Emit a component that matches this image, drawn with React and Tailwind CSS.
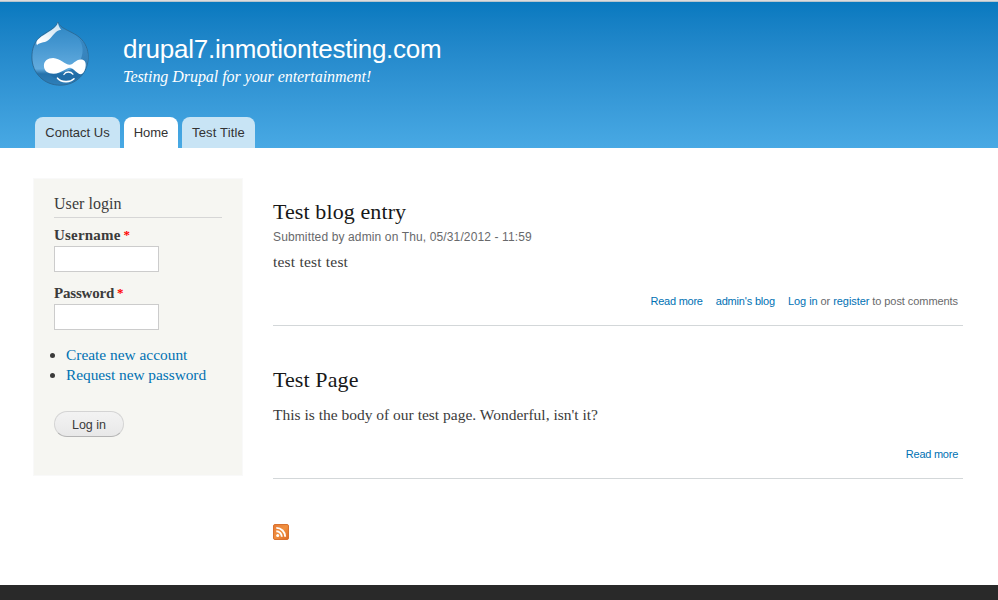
const serif = "font-['Liberation_Serif',serif]";
const sans = "font-['Liberation_Sans',sans-serif]";

function DropletLogo() {
  return (
    <svg className="block h-[66px] w-[60px]" viewBox="0.8 0.8 60 66">
      <defs>
        <linearGradient id="drop" x1="0" y1="0" x2="0" y2="1">
          <stop offset="0" stopColor="#2d86c3" />
          <stop offset="0.35" stopColor="#4496d0" />
          <stop offset="0.74" stopColor="#62abde" />
          <stop offset="0.82" stopColor="#2673ac" />
          <stop offset="1" stopColor="#2e7fb9" />
        </linearGradient>
        <linearGradient id="shine" x1="1" y1="0" x2="0" y2="1">
          <stop offset="0" stopColor="#fff" stopOpacity="0.75" />
          <stop offset="0.45" stopColor="#fff" stopOpacity="0.85" />
          <stop offset="0.85" stopColor="#fff" />
        </linearGradient>
        <linearGradient id="edge" x1="0" y1="0" x2="0" y2="1">
          <stop offset="0" stopColor="#1f6ba6" stopOpacity="0.25" />
          <stop offset="1" stopColor="#1f6ba6" stopOpacity="0.9" />
        </linearGradient>
      </defs>
      <path d="M27.700 0.800C29 5 34 7.500 39 10C43 12 46 13.500 49 16C55 21 58 28 58 36C58 52 46 64 30 64C14 64 1.700 52 1.700 36C1.700 28 4 21 9 16.500C12 13.500 16 11.500 20 9C24 6.500 27 4 27.700 0.800Z" fill="url(#drop)" stroke="#2c6690" strokeOpacity="0.85" strokeWidth="1" />
      <path d="M47 15.500C55 21 57.500 28 57.500 36C57.500 42 56 47 53 51C51 54 47 58 43 60C34 62 24 58 18 52C32 54 45 48 50 39C54 31 53 22 47 15.500Z" fill="url(#edge)" />
      <path d="M27.700 1.200C28.300 5 29.700 7 31 8.500C25 9 23 15 18 19C14 22 8 21 7 24C5.500 22.500 6 20 8 18C12 14 17 12 21 9C25 6 27.200 4 27.700 1.200Z" fill="url(#shine)" />
      <path d="M13.700 44.500C13.700 39.500 17.500 36.700 23 36.700C30 37 35 43.500 39.500 43.500C43 43.500 45.500 38.300 50.500 38.300C54.500 38.300 55.800 41 55.500 44.500C55 49 53 53 50.500 53C47 53 43.500 47 40 46.500C35.500 46.500 31 52.500 23.500 52.500C17.500 52.500 13.700 49.500 13.700 44.500Z" fill="#fff" />
      <path d="M33.700 53.300C35.500 50 40.500 50 42.700 53" fill="none" stroke="#fff" strokeWidth="1.300" strokeLinecap="round" />
      <path d="M27.300 57C31 61.300 40 61.600 43.800 57.600" fill="none" stroke="#fff" strokeWidth="1.600" strokeLinecap="round" />
    </svg>
  );
}

function FeedIcon() {
  return (
    <svg className="block h-4 w-4" viewBox="0 0 16 16">
      <defs>
        <linearGradient id="feed" x1="0" y1="0" x2="1" y2="1">
          <stop offset="0" stopColor="#e77b36" />
          <stop offset="0.5" stopColor="#f0903f" />
          <stop offset="1" stopColor="#dd6a28" />
        </linearGradient>
      </defs>
      <rect x="0.500" y="0.500" width="15" height="15" rx="1.500" fill="url(#feed)" stroke="#d9722f" />
      <circle cx="4.700" cy="11.400" r="1.500" fill="#fff" />
      <path d="M3.300 7.200A5.500 5.500 0 0 1 8.800 12.800M3.300 3.900A8.900 8.900 0 0 1 12.200 12.800" fill="none" stroke="#fff" strokeWidth="1.900" />
    </svg>
  );
}

function Field({ label, tracking }) {
  return (
    <div className="mb-[12px] h-[46px]">
      <div className={`${serif} flex h-[20px] text-[15px] leading-[18px] font-bold`}>
        <span className={tracking}>{label}</span>
        <span className="ml-[3px] text-[13px] font-bold text-[#f00]">*</span>
      </div>
      <input className="block h-[26px] w-[105px] border border-[#ccc] bg-white" />
    </div>
  );
}

export default function App() {
  return (
    <div className={`flex h-[600px] w-[998px] flex-col overflow-hidden bg-white text-[#3b3b3b] ${sans}`}>
      <div className="h-px bg-[#dcdcdc]" />
      <div className="h-px bg-[#b4c4ce]" />
      <header className="flex h-[146px] flex-col justify-between bg-linear-to-b from-[#0779bf] to-[#48a9e4]">
        <div className="flex pt-[20px] pl-[31px]">
          <DropletLogo />
          <div className="ml-[32px] text-white">
            <div className="mt-[12px] h-[30px] text-[26px] leading-[31px] whitespace-nowrap"><span className="tracking-[-0.25px]">drupal7.inmotiontesting.com</span></div>
            <div className={`${serif} h-[20px] text-[16px] leading-[26px] whitespace-nowrap italic`}><span className="tracking-[-0.05px]">Testing Drupal for your entertainment!</span></div>
          </div>
        </div>
        <nav className="flex h-[31px] gap-1 pl-[35px] text-[13px] leading-[31px] text-[#333]">
          <a className="w-[85px] rounded-t-[8px] bg-[#c8e4f5] text-center whitespace-nowrap">Contact Us</a>
          <a className="w-[54px] rounded-t-[8px] bg-white text-center">Home</a>
          <a className="w-[73px] rounded-t-[8px] bg-[#c8e4f5] text-center tracking-[0.15px] whitespace-nowrap">Test Title</a>
        </nav>
      </header>

      <div className="flex h-[437px] items-start">
        <aside className="mt-[30px] ml-[33px] h-[298px] w-[210px] border border-[#f9f9f9] bg-[#f6f6f2] px-[20px] pt-[15px]">
          <h2 className={`${serif} mb-[8px] h-[24px] w-[168px] border-b border-[#d6d6d6] text-[16px] leading-[20px]`}><span className="tracking-[0.05px]">User login</span></h2>
          <Field label="Username" tracking="tracking-[0.2px]" />
          <Field label="Password" tracking="tracking-[-0.2px]" />
          <ul className={`${serif} pt-[3px] pl-[12px] text-[15.400px] leading-[20px] text-[#0071b3]`}>
            <li className="flex h-5 items-center"><span className="mr-[11px] -ml-[16px] h-[5px] w-[5px] rounded-full bg-[#3b3b3b]" /><span className="whitespace-nowrap">Create new account</span></li>
            <li className="flex h-5 items-center"><span className="mr-[11px] -ml-[16px] h-[5px] w-[5px] rounded-full bg-[#3b3b3b]" /><span className="tracking-[-0.05px] whitespace-nowrap">Request new password</span></li>
          </ul>
          <button className="mt-[26px] block h-[26px] w-[70px] rounded-full border border-[#d4d4d4] border-b-[#b4b4b4] bg-linear-to-b from-[#f3f3f3] to-[#e8e8e8] text-[12.500px] leading-[26px] text-[#3a3a3a]">Log in</button>
        </aside>

        <main className="ml-[30px] w-[690px]">
          <article className="h-[178px] border-b border-[#d3d7d9] pt-[50px]">
            <h2 className={`${serif} h-[29px] text-[22px] leading-[28px] text-[#181818]`}><span className="tracking-[0.1px]">Test blog entry</span></h2>
            <p className="h-[20px] text-[12px] leading-[20px] text-[#68696b]"><span className="tracking-[0.130px]">Submitted by admin on Thu, 05/31/2012 - 11:59</span></p>
            <p className={`${serif} mt-[5px] h-[20px] text-[15.500px] leading-[20px]`}><span className="tracking-[0.200px]">test test test</span></p>
            <div className="mt-[21px] flex justify-end gap-[13px] pr-[5px] text-[11px] leading-[16px] whitespace-nowrap text-[#68696b]">
              <a className="tracking-[-0.25px] text-[#0071b3]">Read more</a>
              <a className="tracking-[-0.18px] text-[#0071b3]">admin's blog</a>
              <span className="tracking-[-0.07px]"><a className="text-[#0071b3]">Log in</a> or <a className="text-[#0071b3]">register</a> to post comments</span>
            </div>
          </article>
          <article className="h-[153px] border-b border-[#d3d7d9] pt-[40px]">
            <h2 className={`${serif} h-[29px] text-[22px] leading-[28px] text-[#181818]`}><span className="tracking-[0.1px]">Test Page</span></h2>
            <p className={`${serif} mt-[10px] h-[20px] text-[15.500px] leading-[20px] whitespace-nowrap`}>This is the body of our test page. Wonderful, isn't it?</p>
            <div className="mt-[21px] flex justify-end pr-[5px] text-[11px] leading-[16px]">
              <a className="tracking-[-0.25px] text-[#0071b3]">Read more</a>
            </div>
          </article>
          <div className="pt-[45px]"><FeedIcon /></div>
        </main>
      </div>
      <footer className="h-[15px] bg-[#292929]" />
    </div>
  );
}
